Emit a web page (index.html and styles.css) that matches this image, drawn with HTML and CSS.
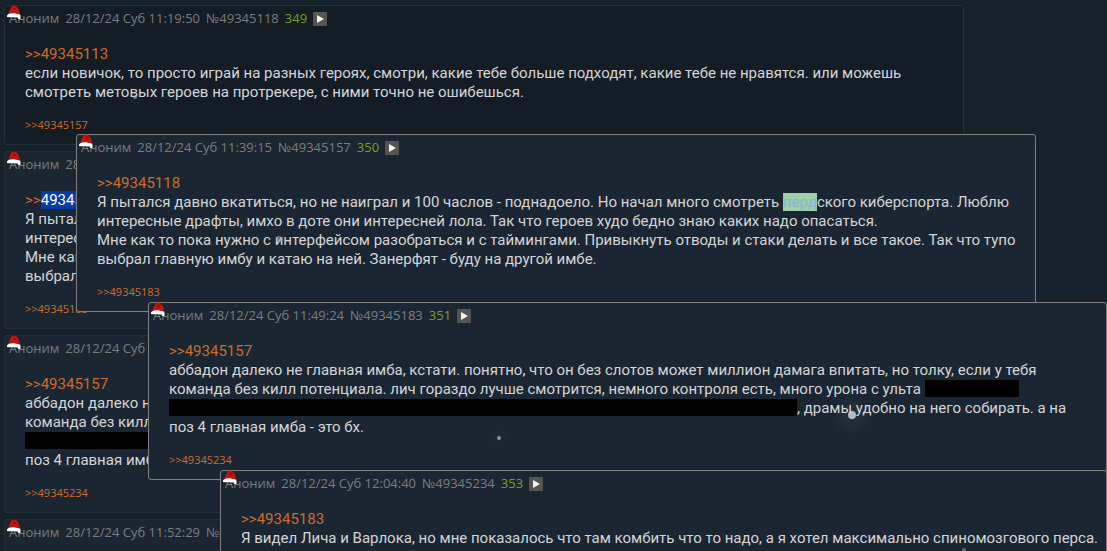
FILE: index.html
```
<!DOCTYPE html>
<html lang="ru">

<head>
    <meta charset="UTF-8">
    <meta name="viewport" content="width=device-width, initial-scale=1.0">
    <title>Тред</title>
    <link rel="stylesheet" href="styles.css">
</head>

<body>
    <svg class="defs" aria-hidden="true">
        <symbol id="hat" viewBox="0 0 15 15">
            <path d="M1.5 9 C2.5 5 4 1 6.5 0.5 C10 0 12.5 4 13 10 Z" fill="#c41410" />
            <path d="M6 4 L8 2.5 L9 5 L8 5 Z" fill="#7d0c0a" />
            <path d="M0 10.5 C1 8.5 5 8 8 8.5 C11 9 13.5 9.5 13.5 10.5 L13.5 14 L11.5 14 L10.5 12.5 C7 12 3 12.5 0 12 Z" fill="#ffffff" />
        </symbol>
        <symbol id="play" viewBox="0 0 14 14">
            <rect width="14" height="14" rx="1" fill="#555555" />
            <path d="M4 3 L11 7 L4 11 Z" fill="#f2f2f2" />
        </symbol>
    </svg>

    <main class="thread">
        <article class="post post-viewed">
            <header class="post-header">
                <svg class="hat"><use href="#hat" /></svg>
                <span>Аноним</span>
                <time>28/12/24 Суб 11:19:50</time>
                <span>№49345118</span>
                <span class="post-order">349</span>
                <button class="post-menu" aria-label="Меню"><svg><use href="#play" /></svg></button>
            </header>
            <div class="post-message">
                <a href="#49345113">&gt;&gt;49345113</a><br>
                если новичок, то просто играй на разных героях, смотри, какие тебе больше подходят, какие тебе не нравятся. или можешь<br>
                смотреть метовых героев на протрекере, с ними точно не ошибешься.
            </div>
            <div class="post-replies"><a href="#49345157">&gt;&gt;49345157</a></div>
        </article>

        <article class="post">
            <header class="post-header">
                <svg class="hat"><use href="#hat" /></svg>
                <span>Аноним</span>
                <time>28/12/24 Суб 11:39:15</time>
                <span>№49345157</span>
                <span class="post-order">350</span>
            </header>
            <div class="post-message">
                <a href="#49345118">&gt;&gt;<span class="selected">49345118</span></a><br>
                Я пытался давно вкатиться, но не наиграл<br>
                интересные драфты, имхо в доте они<br>
                Мне как то пока нужно с интерфейсом<br>
                выбрал главную имбу и катаю на ней.
            </div>
            <div class="post-replies"><a href="#49345183">&gt;&gt;49345183</a></div>
        </article>

        <article class="post">
            <header class="post-header">
                <svg class="hat"><use href="#hat" /></svg>
                <span>Аноним</span>
                <time>28/12/24 Суб 11:49:24</time>
                <span>№49345183</span>
                <span class="post-order">351</span>
            </header>
            <div class="post-message">
                <a href="#49345157">&gt;&gt;49345157</a><br>
                аббадон далеко не главная имба, кстати.<br>
                команда без килл потенциала. лич гораздо<br>
                <span class="spoiler spoiler-long"></span><br>
                поз 4 главная имба - это бх.
            </div>
            <div class="post-replies"><a href="#49345234">&gt;&gt;49345234</a></div>
        </article>

        <article class="post">
            <header class="post-header">
                <svg class="hat"><use href="#hat" /></svg>
                <span>Аноним</span>
                <time>28/12/24 Суб 11:52:29</time>
                <span>№49345192</span>
                <span class="post-order">352</span>
            </header>
            <div class="post-message"></div>
        </article>
    </main>

    <article class="post popup popup-first">
        <header class="post-header">
            <svg class="hat"><use href="#hat" /></svg>
            <span>Аноним</span>
            <time>28/12/24 Суб 11:39:15</time>
            <span>№49345157</span>
            <span class="post-order">350</span>
            <button class="post-menu" aria-label="Меню"><svg><use href="#play" /></svg></button>
        </header>
        <div class="post-message">
            <a href="#49345118">&gt;&gt;49345118</a><br>
            Я пытался давно вкатиться, но не наиграл и 100 часлов - поднадоело. Но начал много смотреть <mark>перд</mark>ского киберспорта. Люблю<br>
            интересные драфты, имхо в доте они интересней лола. Так что героев худо бедно знаю каких надо опасаться.<br>
            Мне как то пока нужно с интерфейсом разобраться и с таймингами. Привыкнуть отводы и стаки делать и все такое. Так что тупо<br>
            выбрал главную имбу и катаю на ней. Занерфят - буду на другой имбе.
        </div>
        <div class="post-replies"><a href="#49345183">&gt;&gt;49345183</a></div>
    </article>

    <article class="post popup popup-second">
        <header class="post-header">
            <svg class="hat"><use href="#hat" /></svg>
            <span>Аноним</span>
            <time>28/12/24 Суб 11:49:24</time>
            <span>№49345183</span>
            <span class="post-order">351</span>
            <button class="post-menu" aria-label="Меню"><svg><use href="#play" /></svg></button>
        </header>
        <div class="post-message">
            <a href="#49345157">&gt;&gt;49345157</a><br>
            аббадон далеко не главная имба, кстати. понятно, что он без слотов может миллион дамага впитать, но толку, если у тебя<br>
            команда без килл потенциала. лич гораздо лучше смотрится, немного контроля есть, много урона с ульта <span class="spoiler"></span><br>
            <span class="spoiler spoiler-long"></span>, драмы удобно на него собирать. а на<br>
            поз 4 главная имба - это бх.
        </div>
        <div class="post-replies"><a href="#49345234">&gt;&gt;49345234</a></div>
    </article>

    <article class="post popup popup-third">
        <header class="post-header">
            <svg class="hat"><use href="#hat" /></svg>
            <span>Аноним</span>
            <time>28/12/24 Суб 12:04:40</time>
            <span>№49345234</span>
            <span class="post-order">353</span>
            <button class="post-menu" aria-label="Меню"><svg><use href="#play" /></svg></button>
        </header>
        <div class="post-message">
            <a href="#49345183">&gt;&gt;49345183</a><br>
            Я видел Лича и Варлока, но мне показалось что там комбить что то надо, а я хотел максимально спиномозгового перса.
        </div>
    </article>

    <svg class="snow" aria-hidden="true">
        <defs>
            <radialGradient id="glow">
                <stop offset="0" stop-color="#ffffff" stop-opacity="0.06" />
                <stop offset="1" stop-color="#ffffff" stop-opacity="0" />
            </radialGradient>
        </defs>
        <circle cx="135" cy="97" r="14" fill="url(#glow)" opacity="0.4" />
        <circle cx="135" cy="97" r="2" fill="#c8ccd0" opacity="0.5" />
        <circle cx="279" cy="239" r="3" fill="#a0a8b0" opacity="0.6" />
        <circle cx="499" cy="438" r="15" fill="url(#glow)" opacity="0.3" />
        <circle cx="499" cy="438" r="2" fill="#8d959c" />
        <circle cx="852" cy="415" r="22" fill="url(#glow)" />
        <circle cx="852" cy="415" r="4" fill="#c8cccf" opacity="0.9" />
        <circle cx="964" cy="550" r="2" fill="#8d959c" opacity="0.6" />
    </svg>
</body>

</html>
```

FILE: styles.css
```
body {
    margin: 0;
    padding: 5px 4px;
    overflow: hidden;
    background-color: #17212a;
    color: #d5d5d5;
    font-family: 'Trebuchet MS', Roboto, sans-serif;
    font-size: 15px;
    line-height: 19px;
}

a {
    color: #cf6a2c;
    text-decoration: none;
}

.defs {
    display: none;
}

.thread {
    display: flex;
    flex-direction: column;
    align-items: flex-start;
    gap: 6px;
}

.post {
    box-sizing: border-box;
    width: 100%;
    max-width: 960px;
    padding: 3px 4px 11px;
    border: 1px solid #242f38;
    border-radius: 3px;
    background-color: #1a2733;
}

.post-viewed {
    background-color: #141d26;
}

.post-header {
    position: relative;
    display: flex;
    align-items: center;
    gap: 6px;
    color: #7c7c7c;
    font-family: 'Trebuchet MS', 'Open Sans', sans-serif;
    font-size: 13px;
    white-space: nowrap;
}

.post-order {
    color: #75a01f;
}

.hat {
    position: absolute;
    left: -2px;
    top: -4px;
    width: 15px;
    height: 15px;
}

.post-menu {
    width: 14px;
    height: 14px;
    padding: 0;
    border: 0;
    background: none;
}

.post-menu svg {
    display: block;
    width: 14px;
    height: 14px;
}

.post-message {
    margin: 17px 16px 15px;
    white-space: nowrap;
}

.post-replies {
    margin: 0 16px;
    font-family: 'Trebuchet MS', 'Open Sans', sans-serif;
    font-size: 11px;
    line-height: 16px;
}

.selected {
    background-color: #063ca6;
    color: #ffffff;
}

mark {
    background-color: #9fcfa6;
    color: #8ab4d8;
}

.spoiler {
    display: inline-block;
    width: 94px;
    height: 17px;
    background-color: #000000;
    vertical-align: top;
}

.spoiler-long {
    width: 628px;
}

/* reply previews, each one opens over the link of the previous */
.popup {
    position: absolute;
    border-color: #808080;
}

.popup-first {
    left: 76px;
    top: 134px;
}

.popup-second {
    left: 148px;
    right: 0;
    top: 302px;
    width: auto;
}

.popup-third {
    left: 220px;
    right: 0;
    top: 470px;
    width: auto;
}

.snow {
    position: fixed;
    left: 0;
    top: 0;
    width: 100%;
    height: 100%;
    pointer-events: none;
}
```
